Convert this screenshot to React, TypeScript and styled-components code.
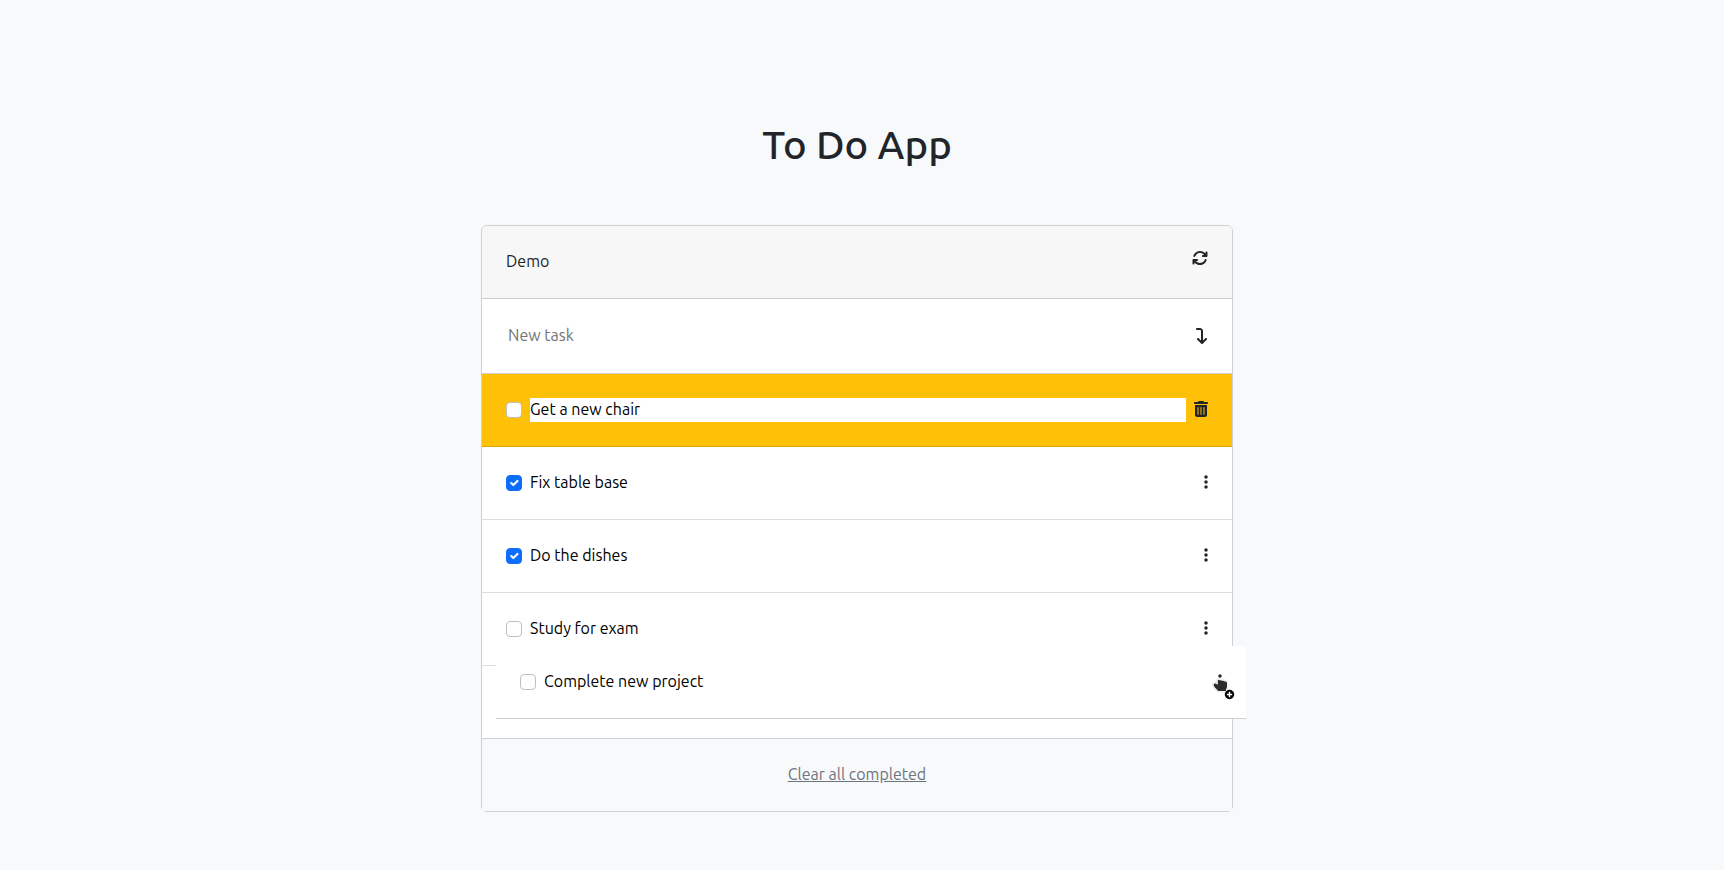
import React, { useState } from "react";
import styled, { createGlobalStyle } from "styled-components";
import {
  FaArrowsRotate,
  FaArrowTurnDown,
  FaEllipsisVertical,
  FaTrashCan,
} from "react-icons/fa6";

const GlobalStyle = createGlobalStyle`
  *, *::before, *::after { box-sizing: border-box; }
  body {
    margin: 0;
    background: #f8f9fb;
    color: #212529;
    font-family: Ubuntu, "Noto Sans", "Open Sans", sans-serif;
    font-size: 16px;
    line-height: 24px;
  }
`;

const Page = styled.main`
  display: flex;
  flex-direction: column;
  align-items: center;
  gap: 56px;
  padding: 121px 10px 48px 0;
`;

const Title = styled.h1`
  margin: 0;
  font-size: 40px;
  font-weight: 560;
  line-height: 48px;
`;

const Card = styled.section`
  width: 100%;
  max-width: 752px;
  border: 1px solid #cfd0d1;
  border-radius: 6px;
  background: #fff;
`;

const CardHeader = styled.header`
  display: flex;
  justify-content: space-between;
  align-items: flex-start;
  padding: 23px 24px 25px;
  border-bottom: 1px solid #cbcbcb;
  border-radius: 5px 5px 0 0;
  background: #f7f7f7;
`;

const NewTaskForm = styled.form`
  display: flex;
  align-items: center;
  gap: 8px;
  padding: 24px;
  border-bottom: 1px solid #d0d0d0;
`;

const IconButton = styled.button<{ $width: number }>`
  display: flex;
  align-items: center;
  flex: none;
  padding: 0;
  border: 0;
  background: none;
  color: #212529;
  cursor: pointer;

  svg {
    width: ${(p) => p.$width}px;
    height: 16px;
  }
`;

const HeaderButton = styled(IconButton)`
  height: 18px;
`;

const RowButton = styled(IconButton)`
  height: 22px;
`;

const TextInput = styled.input`
  flex: 1;
  min-width: 0;
  height: 24px;
  padding: 0 0 2px;
  border: 0;
  outline: 0;
  background: transparent;
  color: #000;
  font: inherit;
`;

const NewTaskInput = styled(TextInput)`
  height: 26px;
  padding: 0 2px 2px;

  &::placeholder {
    color: #757575;
    opacity: 1;
  }
`;

const TaskInput = styled(TextInput)<{ $editing?: boolean }>`
  background: ${(p) => (p.$editing ? "#fff" : "transparent")};
`;

const List = styled.ul`
  margin: 0;
  padding: 0;
  list-style: none;
`;

const Row = styled.div<{ $editing?: boolean; $dragged?: boolean }>`
  display: flex;
  align-items: flex-start;
  gap: 8px;
  padding: 24px;
  border-bottom: 1px solid ${(p) => (p.$editing ? "#dfa807" : p.$dragged ? "#d0d0d0" : "#dedede")};
  background: ${(p) => (p.$editing ? "#ffc107" : "#fff")};
`;

const DragSlot = styled.li`
  position: relative;
  height: 72px;
`;

const DragGhost = styled.div`
  position: absolute;
  top: -20px;
  left: 14px;
  width: 100%;
`;

const DragCursor = styled.svg`
  position: absolute;
  top: 30px;
  right: 8px;
  pointer-events: none;
`;

const Checkbox = styled.input`
  appearance: none;
  flex: none;
  width: 16px;
  height: 16px;
  margin: 4px 0 0;
  border: 1px solid #bfbfbf;
  border-radius: 4px;
  background: #fff center / contain no-repeat;

  &:checked {
    border-color: #0d6efd;
    background-color: #0d6efd;
    background-image: url("data:image/svg+xml,%3csvg xmlns='http://www.w3.org/2000/svg' viewBox='0 0 20 20'%3e%3cpath fill='none' stroke='%23fff' stroke-linecap='round' stroke-linejoin='round' stroke-width='3' d='m6 10 3 3 6-6'/%3e%3c/svg%3e");
  }
`;

const CardFooter = styled.footer`
  display: flex;
  justify-content: center;
  padding: 23px 24px 25px;
  border-top: 1px solid #cfd0d1;
  background: #f8f9fb;
`;

const ClearButton = styled.button`
  padding: 0;
  border: 0;
  background: none;
  color: #6c757d;
  font: inherit;
  text-decoration: underline;
  cursor: pointer;
`;

type Task = { name: string; done: boolean; editing?: boolean };

const initialTasks: Task[] = [
  { name: "Get a new chair", done: false, editing: true },
  { name: "Fix table base", done: true },
  { name: "Do the dishes", done: true },
  { name: "Study for exam", done: false },
];

const draggedTask: Task = { name: "Complete new project", done: false };

function TaskRow({ task, dragged }: { task: Task; dragged?: boolean }) {
  const [done, setDone] = useState(task.done);
  const [name, setName] = useState(task.name);
  return (
    <Row $editing={task.editing} $dragged={dragged}>
      <Checkbox
        type="checkbox"
        aria-label={`Mark ${name} as completed`}
        checked={done}
        onChange={(e) => setDone(e.target.checked)}
      />
      <TaskInput
        type="text"
        aria-label="Task name"
        $editing={task.editing}
        value={name}
        onChange={(e) => setName(e.target.value)}
      />
      <RowButton
        type="button"
        $width={task.editing ? 14 : 4}
        aria-label={task.editing ? "Delete task" : "Task options"}
      >
        {task.editing ? <FaTrashCan /> : <FaEllipsisVertical />}
      </RowButton>
    </Row>
  );
}

const handShape =
  "M5.800 4.600c.2-1.100 1.700-1.100 2 0 .8-.7 2.100-.5 2.500.4.900-.5 2.100-.2 2.400.6 1.300-.3 2.300.3 2.300 1.600v3.300c0 1.800-1.200 2.700-1.200 4.500H6c-.3-1.800-3.800-3-4.300-5.800-.2-1.500 1-2.300 2.300-1.500l1.800 1z";

function GrabbingCursor() {
  return (
    <DragCursor width="26" height="26" viewBox="0 0 26 26" aria-hidden="true">
      <path d={handShape} fill="#2b2b2b" stroke="#e4e4e4" strokeWidth="3" strokeLinejoin="round" paintOrder="stroke" />
      <path d={handShape} fill="#2b2b2b" stroke="#fff" strokeWidth="1.500" strokeLinejoin="round" paintOrder="stroke" />
      <circle cx="17.500" cy="18.500" r="4.700" fill="#000" />
      <path d="M17.500 15.800v5.400M14.800 18.500h5.400" stroke="#fff" strokeWidth="1.500" />
    </DragCursor>
  );
}

export default function App() {
  const [draft, setDraft] = useState("");
  return (
    <>
      <GlobalStyle />
      <Page>
        <Title>To Do App</Title>
        <Card>
          <CardHeader>
            <span>Demo</span>
            <HeaderButton type="button" $width={16} aria-label="Refresh list">
              <FaArrowsRotate />
            </HeaderButton>
          </CardHeader>
          <NewTaskForm onSubmit={(e) => e.preventDefault()}>
            <NewTaskInput
              type="text"
              aria-label="New task"
              placeholder="New task"
              value={draft}
              onChange={(e) => setDraft(e.target.value)}
            />
            <IconButton type="submit" $width={12} aria-label="Add task">
              <FaArrowTurnDown />
            </IconButton>
          </NewTaskForm>
          <List>
            {initialTasks.map((task) => (
              <li key={task.name}>
                <TaskRow task={task} />
              </li>
            ))}
            <DragSlot>
              <DragGhost>
                <TaskRow task={draggedTask} dragged />
                <GrabbingCursor />
              </DragGhost>
            </DragSlot>
          </List>
          <CardFooter>
            <ClearButton type="button">Clear all completed</ClearButton>
          </CardFooter>
        </Card>
      </Page>
    </>
  );
}
